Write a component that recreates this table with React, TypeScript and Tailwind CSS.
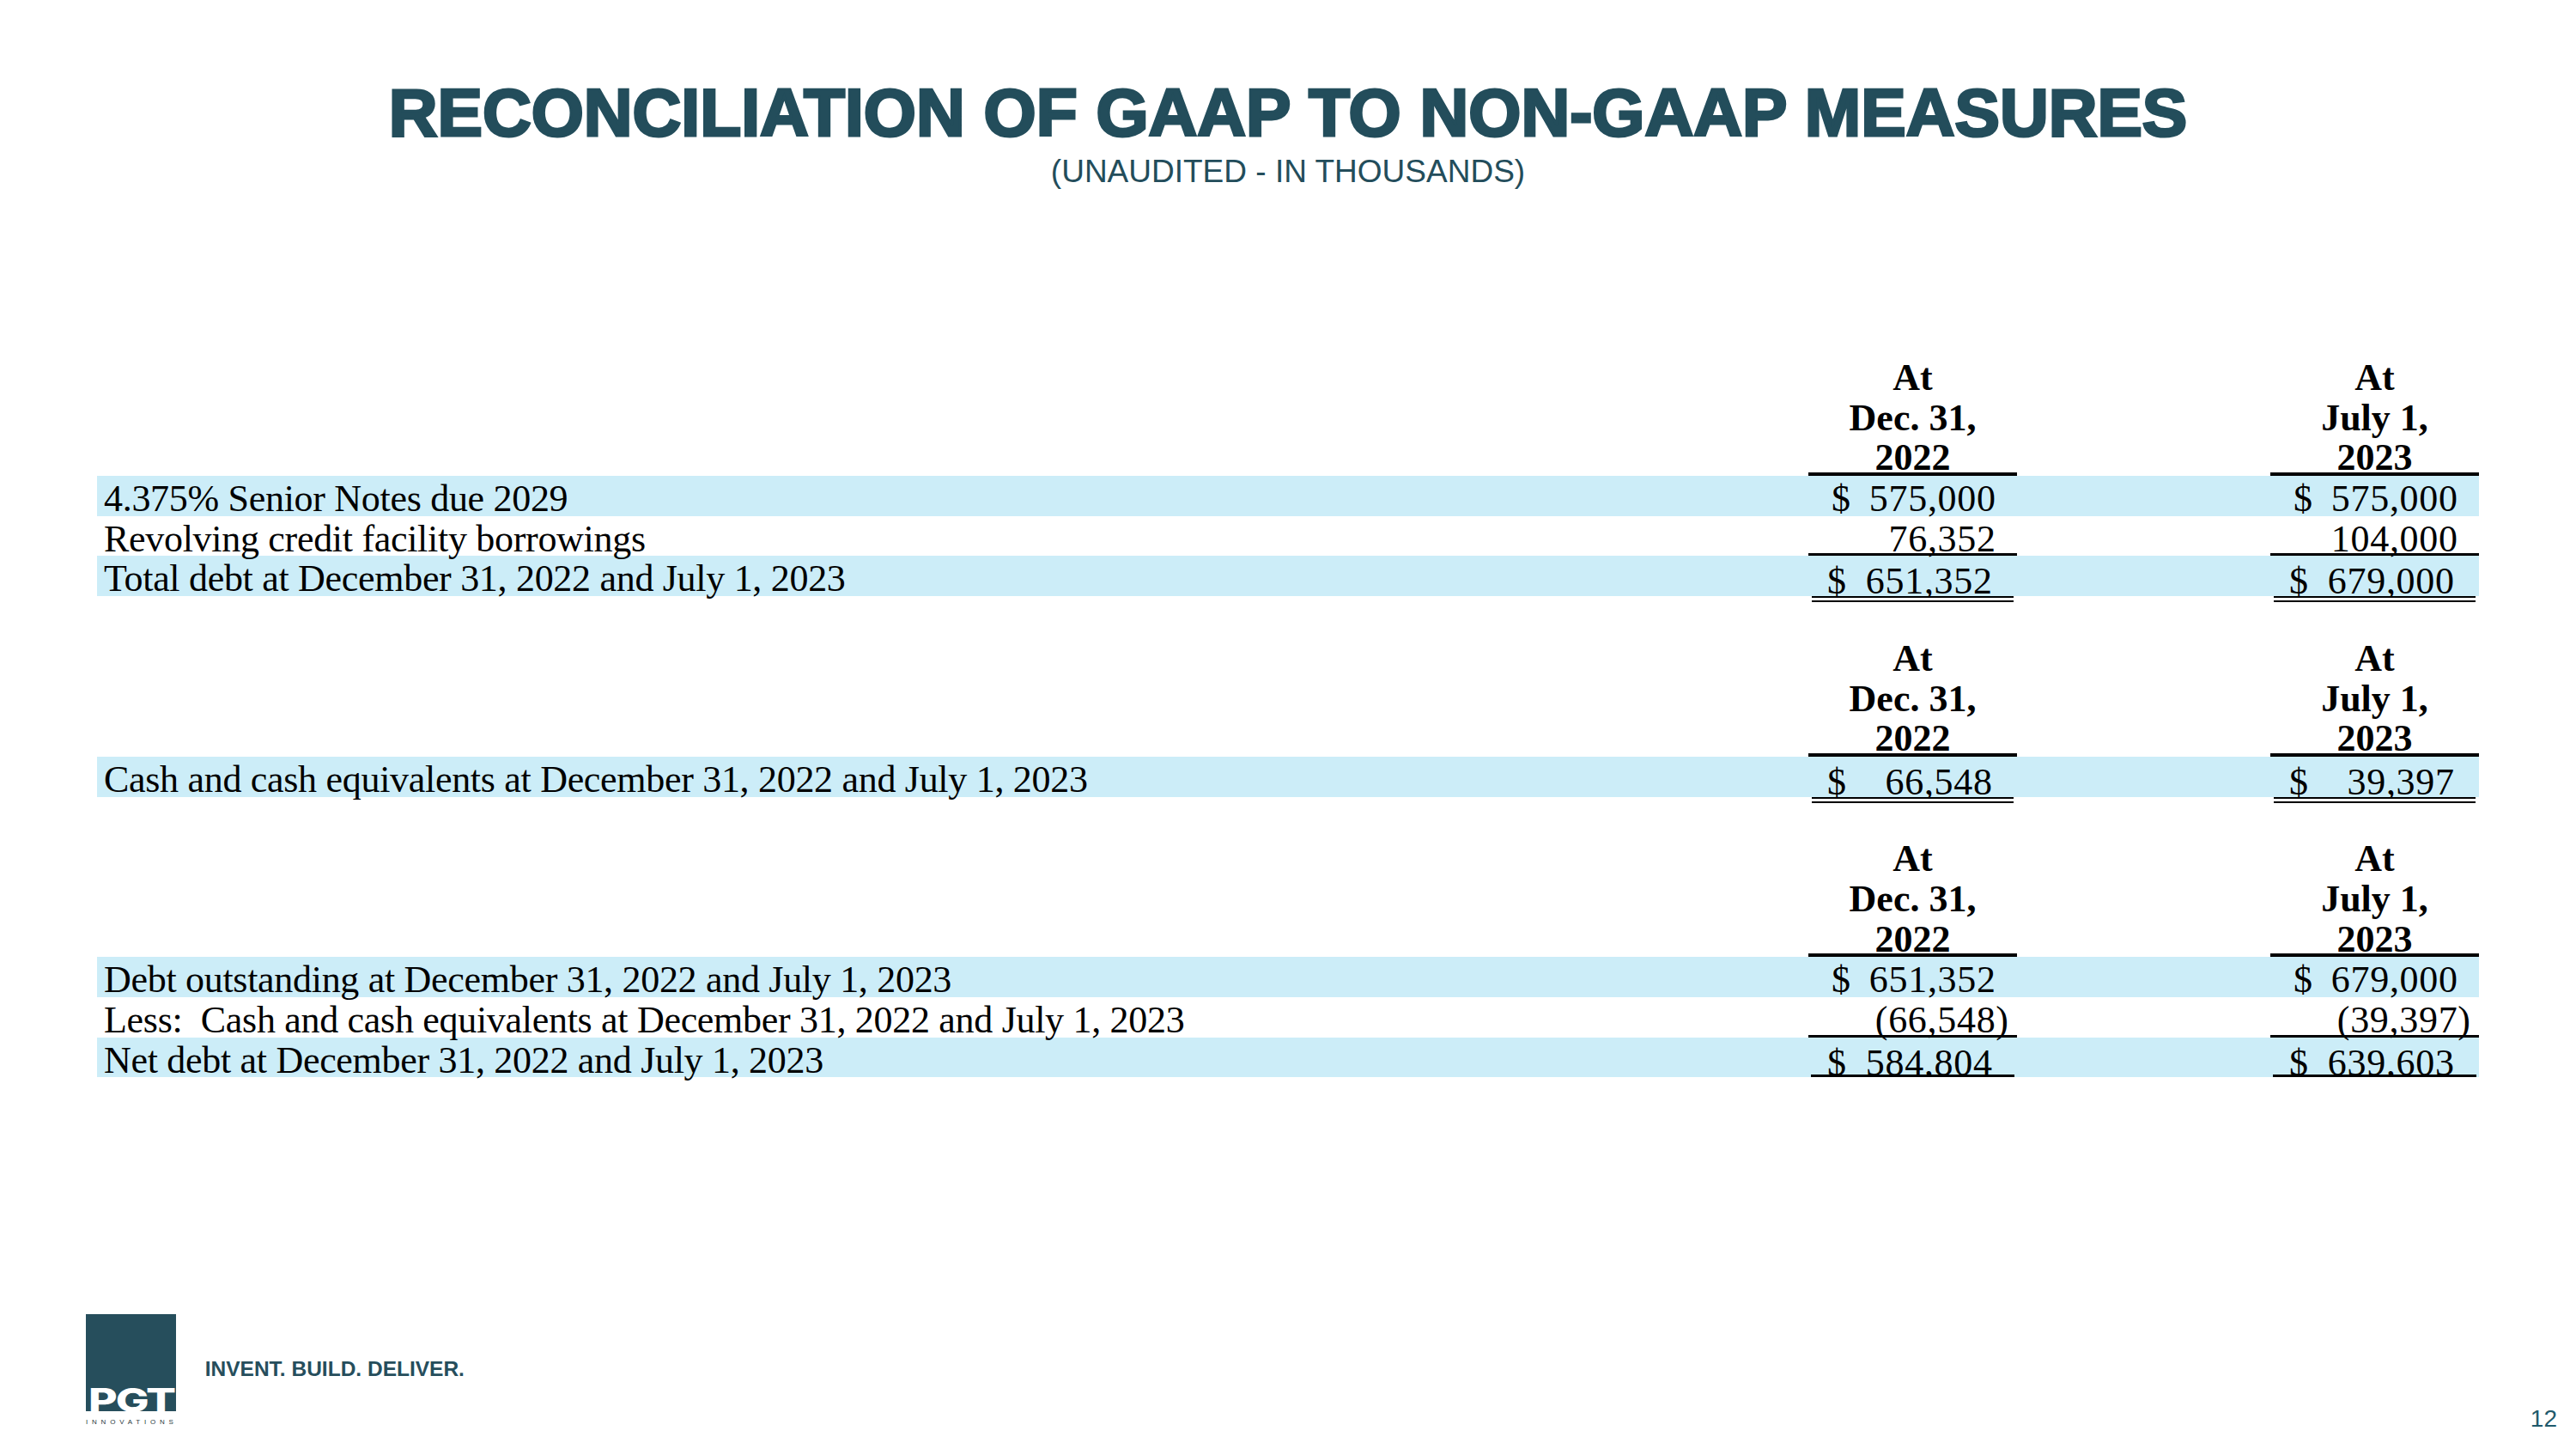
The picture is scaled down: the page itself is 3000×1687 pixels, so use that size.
import React from "react";

type Amt = { cur?: boolean; v: string; neg?: boolean };
type Kind = "head" | "headLine" | "plain" | "under" | "total" | "net" | "blank";

interface RowProps {
  kind: Kind;
  band?: boolean;
  label?: string;
  c1?: Amt | string;
  c2?: Amt | string;
}

const serif = "font-['Liberation_Serif','Times_New_Roman',serif]";

function Value({ a }: { a: Amt }) {
  return (
    <>
      <span>{a.cur ? "$" : ""}</span>
      <span className={`tracking-[0.7px] ${a.neg ? "-mr-[15px]" : ""}`}>{a.v}</span>
    </>
  );
}

function Cell({ kind, c }: { kind: Kind; c?: Amt | string }) {
  if (kind === "blank" || c === undefined) return <div className="w-[243px]" />;

  if (typeof c === "string") {
    // column heading
    return (
      <div
        className={`w-[243px] h-[46.7px] pt-[3px] text-center font-bold leading-[46.7px] ${
          kind === "headLine" ? "border-b-[4px] border-black" : ""
        }`}
      >
        {c}
      </div>
    );
  }

  if (kind === "total") {
    return (
      <div className="w-[243px] px-[4px]">
        <div className="flex h-[54px] justify-between overflow-hidden border-b-[7px] border-double border-black pt-[7px] pl-[18px] pr-[24.3px] leading-[46.7px]">
          <Value a={c} />
        </div>
      </div>
    );
  }

  if (kind === "net") {
    return (
      <div className="w-[243px] px-[3px]">
        <div className="flex h-[46.7px] justify-between overflow-hidden border-b-[3px] border-black pt-[7px] pl-[19px] pr-[25.3px] leading-[46.7px]">
          <Value a={c} />
        </div>
      </div>
    );
  }

  return (
    <div
      className={`flex w-[243px] h-[46.7px] justify-between pt-[4px] pl-[27px] pr-[24.3px] leading-[46.7px] ${
        kind === "under" ? "border-b-[3px] border-black" : ""
      }`}
    >
      <Value a={c} />
    </div>
  );
}

function Row({ kind, band, label, c1, c2 }: RowProps) {
  return (
    <div className={`flex h-[46.7px] ${band ? "bg-[#ccedf8]" : ""}`}>
      <div className="flex-1 whitespace-pre pt-[4px] pl-[8px] leading-[46.7px] tracking-[-0.3px]">{label}</div>
      <Cell kind={kind} c={c1} />
      <div className="w-[295px]" />
      <Cell kind={kind} c={c2} />
    </div>
  );
}

function Heading() {
  return (
    <>
      <Row kind="head" c1="At" c2="At" />
      <Row kind="head" c1="Dec. 31," c2="July 1," />
      <Row kind="headLine" c1="2022" c2="2023" />
    </>
  );
}

export default function App() {
  return (
    <div className="relative flex h-[1687px] w-[3000px] flex-col overflow-hidden bg-white font-['Liberation_Sans',Arial,sans-serif]">
      {/* title */}
      <div className="mt-[92px] text-center">
        <h1 className="text-[78.6px] font-bold leading-[78px] text-[#234d5b] [-webkit-text-stroke:3px_#234d5b]">
          RECONCILIATION OF GAAP TO NON-GAAP MEASURES
        </h1>
        <div className="mt-[11px] text-[37px] leading-[37px] text-[#234d5b]">(UNAUDITED - IN THOUSANDS)</div>
      </div>

      {/* table */}
      <div className={`ml-[113px] mt-[196px] w-[2774px] text-[44px] text-black ${serif}`}>
        <Heading />
        <Row kind="plain" band label="4.375% Senior Notes due 2029" c1={{ cur: true, v: "575,000" }} c2={{ cur: true, v: "575,000" }} />
        <Row kind="under" label="Revolving credit facility borrowings" c1={{ v: "76,352" }} c2={{ v: "104,000" }} />
        <Row kind="total" band label="Total debt at December 31, 2022 and July 1, 2023" c1={{ cur: true, v: "651,352" }} c2={{ cur: true, v: "679,000" }} />
        <Row kind="blank" />

        <Heading />
        <Row kind="total" band label="Cash and cash equivalents at December 31, 2022 and July 1, 2023" c1={{ cur: true, v: "66,548" }} c2={{ cur: true, v: "39,397" }} />
        <Row kind="blank" />

        <Heading />
        <Row kind="plain" band label="Debt outstanding at December 31, 2022 and July 1, 2023" c1={{ cur: true, v: "651,352" }} c2={{ cur: true, v: "679,000" }} />
        <Row kind="under" label="Less:  Cash and cash equivalents at December 31, 2022 and July 1, 2023" c1={{ v: "(66,548)", neg: true }} c2={{ v: "(39,397)", neg: true }} />
        <Row kind="net" band label="Net debt at December 31, 2022 and July 1, 2023" c1={{ cur: true, v: "584,804" }} c2={{ cur: true, v: "639,603" }} />
      </div>

      {/* footer */}
      <div className="mt-[276px] flex items-start pl-[100px] pr-[22px]">
        <div className="flex flex-col">
          <div className="relative h-[113px] w-[105px] overflow-hidden bg-[#264e5c]">
            <span className="absolute bottom-[-6px] left-[3px] origin-left scale-x-[1.36] font-['Inter',sans-serif] text-[38px] font-extrabold leading-[38px] tracking-[-1.5px] text-white">
              PGT
            </span>
          </div>
          <div className="mt-[9px] text-[8px] font-medium leading-[8px] tracking-[4.8px] text-[#2b3a40]">INNOVATIONS</div>
        </div>
        <div className="ml-[32px] mt-[52px] text-[24.5px] font-bold leading-[24.5px] text-[#264e5c]">
          INVENT. BUILD. DELIVER.
        </div>
        <div className="ml-auto mt-[108px] text-[28px] leading-[28px] text-[#1f5a6c]">12</div>
      </div>
    </div>
  );
}
